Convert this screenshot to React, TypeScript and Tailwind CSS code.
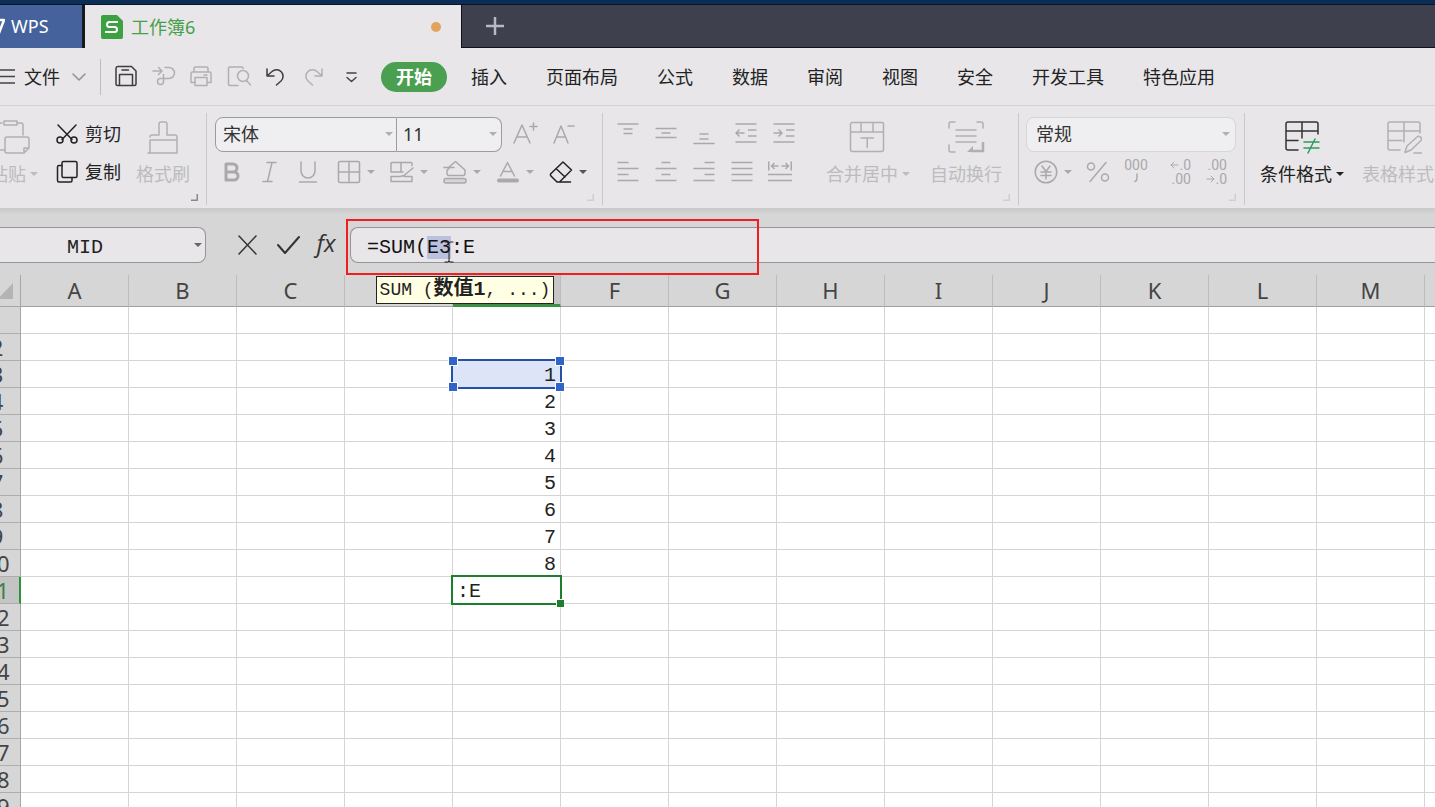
import React, { useEffect, useRef, useState } from "react";
import clsx from "clsx";

const COLUMNS = ["A", "B", "C", "D", "E", "F", "G", "H", "I", "J", "K", "L", "M", "N"];
const ROWS = Array.from({ length: 19 }, (_, i) => i + 1);
const MENUS = ["插入", "页面布局", "公式", "数据", "审阅", "视图", "安全", "开发工具", "特色应用"];

// 被函数提示遮住的列标
const COVERED = ["D", "E"];

const CELLS: Record<string, string> = {
  E3: "1",
  E4: "2",
  E5: "3",
  E6: "4",
  E7: "5",
  E8: "6",
  E9: "7",
  E10: "8",
  E11: ":E",
};

type IconProps = {
  w?: number;
  h?: number;
  className?: string;
  children: React.ReactNode;
};

function Icon({ w = 24, h = 24, className, children }: IconProps) {
  return (
    <svg
      width={w}
      height={h}
      viewBox={`0 0 ${w} ${h}`}
      fill="none"
      stroke="currentColor"
      strokeWidth="1.5"
      strokeLinecap="round"
      strokeLinejoin="round"
      className={clsx("shrink-0", className)}
      aria-hidden="true"
    >
      {children}
    </svg>
  );
}

function Caret({ className }: { className?: string }) {
  return (
    <svg width="8" height="4" viewBox="0 0 8 4" className={clsx("shrink-0", className)} aria-hidden="true">
      <path d="M0 0h8L4 4z" fill="currentColor" />
    </svg>
  );
}

function Group({ className, corner, children }: { className?: string; corner?: string; children: React.ReactNode }) {
  return (
    <section className={clsx("relative flex h-[92px] shrink-0 border-r border-[#c9c9c9]", className)}>
      {children}
      {corner && (
        <Icon w={7} h={7} className={clsx("absolute right-2 bottom-1", corner)}>
          <path d="M6.25 0v6.25H0" />
        </Icon>
      )}
    </section>
  );
}

function SmallButton({ label, className, children }: { label: string; className?: string; children: React.ReactNode }) {
  return (
    <button aria-label={label} className={clsx("flex h-[38px] w-[38px] shrink-0 items-center justify-center", className)}>
      {children}
    </button>
  );
}

function SplitButton({ label, className, children }: { label: string; className?: string; children: React.ReactNode }) {
  return (
    <button aria-label={label} className={clsx("flex h-[38px] w-[53px] shrink-0 items-center gap-1.5 pl-1", className)}>
      {children}
      <Caret />
    </button>
  );
}

function TallButton({ label, caret, className, children }: { label: string; caret?: boolean; className?: string; children: React.ReactNode }) {
  return (
    <button className={clsx("flex shrink-0 flex-col pt-[3px] text-lg whitespace-nowrap", className)}>
      <span className="flex h-[38px] w-full items-center justify-center">{children}</span>
      <span className="flex h-9 w-full items-center justify-center gap-1">
        {label}
        {caret && <Caret />}
      </span>
    </button>
  );
}

function Tabs() {
  return (
    <header className="flex h-[43px] bg-[#3e404e]">
      <button className="flex w-[85px] items-center gap-1.5 border-r-[3px] border-[#17191f] bg-[#45629d] pb-0.5 text-lg text-white">
        <Icon w={5} h={16}>
          <path d="M-6 2h10L-1 15" strokeWidth="2.5" />
        </Icon>
        WPS
      </button>
      <button className="flex w-[376px] items-center bg-[#e8e6e9] pr-5 pl-4 text-lg text-[#46a049]">
        <svg width="22" height="24" viewBox="0 0 22 24" className="mr-2 shrink-0" aria-hidden="true">
          <path d="M2 0h14l6 6v16a2 2 0 0 1-2 2H2a2 2 0 0 1-2-2V2a2 2 0 0 1 2-2z" fill="#3ca141" />
          <path
            d="M16 7H8.500a2.500 2.500 0 0 0 0 5h5a2.500 2.500 0 0 1 0 5H5"
            fill="none"
            stroke="#fff"
            strokeWidth="2"
            strokeLinecap="square"
          />
        </svg>
        工作簿6
        <span className="ml-auto size-2.5 rounded-full bg-[#e2a35f]" />
      </button>
      <div className="flex flex-1 border-b border-l border-[#101116] pl-6">
        <button aria-label="新建" className="flex items-center text-[#b6b9c6]">
          <Icon w={18} h={20}>
            <path d="M0 10h18M9 1v18" strokeWidth="2.5" strokeLinecap="butt" />
          </Icon>
        </button>
      </div>
    </header>
  );
}

function MenuBar() {
  return (
    <nav className="flex h-[58px] items-center border-b border-[#d3d2d4] text-lg whitespace-nowrap text-[#222]">
      <button className="flex items-center">
        <Icon w={15} h={15} className="mr-[9px] text-[#444]">
          <path d="M-3 1h18M-3 7.500h18M-3 14h18" strokeLinecap="butt" />
        </Icon>
        文件
        <Icon w={14} h={8} className="ml-3 text-[#909090]">
          <path d="M1 1l6 6 6-6" />
        </Icon>
      </button>
      <span className="ml-3.5 h-9 w-px bg-[#bdbdbd]" />
      <div className="ml-[13px] flex w-[249px] justify-between text-[#b0b0b2]">
        <button aria-label="保存" className="text-[#3d3d3d]">
          <Icon>
            <path d="M4 1.500h13.500l4.500 4.500v13a1.500 1.500 0 0 1-1.500 1.500H3.500A1.500 1.500 0 0 1 2 19V3.500a2 2 0 0 1 2-2z" />
            <path d="M5.500 20V9.500h13V20M8 5h6.500" />
          </Icon>
        </button>
        <button aria-label="输出">
          <Icon>
            <path d="M1 6h8.500M6.500 2.500L10 6l-3.500 3.500M13 2.500h4a5.500 5.500 0 0 1 0 11H8.500a3 3 0 1 0 3 3V9.500" />
          </Icon>
        </button>
        <button aria-label="打印">
          <Icon>
            <path d="M5 7V3.500A1.500 1.500 0 0 1 6.500 2h11A1.500 1.500 0 0 1 19 3.500V7M5.500 17.500H2V8.500A1.500 1.500 0 0 1 3.500 7h17A1.500 1.500 0 0 1 22 8.500v9h-3.500M6 12.500h12v8H6zM15 10h3" />
          </Icon>
        </button>
        <button aria-label="打印预览">
          <Icon>
            <path d="M11 20.500H3A1.500 1.500 0 0 1 1.500 19V3.500A1.500 1.500 0 0 1 3 2h11.500A1.500 1.500 0 0 1 16 3.500" />
            <circle cx="16" cy="11" r="5.500" />
            <path d="M19.500 15.500l4 4.500" />
          </Icon>
        </button>
        <button aria-label="撤销" className="text-[#3d3d3d]">
          <Icon>
            <path d="M3 4v7h7M3.500 10.500L8 6.500A6.500 6.500 0 1 1 17 16l-4.500 4" />
          </Icon>
        </button>
        <button aria-label="恢复">
          <Icon>
            <path d="M20 4v7h-7M19.500 10.500L15 6.500A6.500 6.500 0 1 0 6 16l4.500 4" />
          </Icon>
        </button>
        <button aria-label="自定义" className="text-[#444]">
          <Icon>
            <path d="M8 8h9M8 12.500l4.500 4 4.500-4" />
          </Icon>
        </button>
      </div>
      <button className="ml-[18px] h-[30px] w-[66px] rounded-full bg-[#4a9f50] font-bold text-white">开始</button>
      <div className="ml-6 flex gap-[39px]">
        {MENUS.map((menu) => (
          <button key={menu}>{menu}</button>
        ))}
      </div>
    </nav>
  );
}

function AlignIcon({ d }: { d: string }) {
  return (
    <Icon>
      <path d={d} strokeLinecap="butt" />
    </Icon>
  );
}

function SmallArrow({ d }: { d: string }) {
  return (
    <Icon w={9} h={8}>
      <path d={d} strokeWidth="1" />
    </Icon>
  );
}

function Ribbon() {
  return (
    <div className="flex h-[102px] overflow-hidden pt-[7px] text-[#a9a9ab]">
      {/* 剪贴板 */}
      <Group className="w-[207px] pt-0.5" corner="text-[#888]">
        <TallButton label="粘贴" caret className="-ml-2.5 text-[#bcbcbe]">
          <Icon w={38} h={34} className="mr-[7px] text-[#b0b0b2]">
            <path d="M10 3H5a2 2 0 0 0-2 2v23a2 2 0 0 0 2 2h7M25 3h4a2 2 0 0 1 2 2v10M12 1h13v4H12zM13 19a2 2 0 0 1 2-2h20a2 2 0 0 1 2 2v9l-5 5H15a2 2 0 0 1-2-2zM32 33v-5h5" />
          </Icon>
        </TallButton>
        <div className="ml-[17px] shrink-0 text-lg text-[#222]">
          <button className="flex h-[38px] items-center gap-1.5 whitespace-nowrap">
            <Icon>
              <path d="M3 3l14 14.500M21 3L7 17.500" />
              <circle cx="5" cy="18" r="3" />
              <circle cx="19" cy="18" r="3" />
            </Icon>
            剪切
          </button>
          <button className="flex h-[38px] items-center gap-1.5 whitespace-nowrap">
            <Icon>
              <rect x="7" y="1.500" width="15" height="16" rx="1.500" />
              <path d="M7 5.500H4A1.500 1.500 0 0 0 2.500 7v13.500A1.500 1.500 0 0 0 4 22h11.500a1.500 1.500 0 0 0 1.500-1.500v-3" />
            </Icon>
            复制
          </button>
        </div>
        <TallButton label="格式刷" className="ml-[15px] text-[#bcbcbe]">
          <Icon w={32} h={34} className="text-[#b0b0b2]">
            <path d="M3 17a2 2 0 0 1 2-2h7V4a2 2 0 0 1 2-2h4a2 2 0 0 1 2 2v11h8a2 2 0 0 1 2 2v16H1M3 33V20h27" />
          </Icon>
        </TallButton>
      </Group>

      {/* 字体 */}
      <Group className="w-[396px] flex-col pt-0.5 pl-1.5" corner="text-[#cfcfcf]">
        <div className="flex h-[38px] items-center pl-0.5">
          <label className="relative flex h-[35px] w-[182px] items-center">
            <select aria-label="字体" className="size-full appearance-none rounded-l-lg border border-[#9c9c9c] bg-[#efeef0] pl-[7px] text-lg text-[#333]">
              <option>宋体</option>
            </select>
            <Caret className="pointer-events-none absolute right-1 text-[#b0b0b0]" />
          </label>
          <label className="relative flex h-[35px] w-[105px] items-center">
            <select aria-label="字号" className="size-full appearance-none rounded-r-lg border border-l-0 border-[#9c9c9c] bg-[#efeef0] pl-1.5 text-lg text-[#333]">
              <option>11</option>
            </select>
            <Caret className="pointer-events-none absolute right-[5px] text-[#b0b0b0]" />
          </label>
          <SmallButton label="增大字号" className="ml-1">
            <Icon w={26} h={24}>
              <path d="M2 21l8-18 8 18M5 15h10M18 4.500h7M21.500 1v7" />
            </Icon>
          </SmallButton>
          <SmallButton label="减小字号">
            <Icon w={26} h={24}>
              <path d="M4 21l7-17 7 17M6.500 15h9M18 4h6" />
            </Icon>
          </SmallButton>
        </div>
        <div className="flex h-[38px] items-center">
          <SmallButton label="加粗">
            <Icon>
              <path d="M6 4h7a4 4 0 0 1 0 8H6zM6 12h8a4 4 0 0 1 0 8H6z" strokeWidth="3" />
            </Icon>
          </SmallButton>
          <SmallButton label="倾斜">
            <Icon>
              <path d="M9 2.500h9M5 21.500h9M14 2.500l-4.500 19" />
            </Icon>
          </SmallButton>
          <SmallButton label="下划线" className="mr-1.5">
            <Icon>
              <path d="M5 2v9a7 7 0 0 0 14 0V2M3.500 22h17" />
            </Icon>
          </SmallButton>
          <SplitButton label="边框">
            <Icon>
              <rect x="1.500" y="1.500" width="21" height="21" rx="1.500" />
              <path d="M12 1.500v21M1.500 12h21" />
            </Icon>
          </SplitButton>
          <SplitButton label="绘图边框">
            <Icon>
              <path d="M22 5.500v-2a1 1 0 0 0-1-1H2a1 1 0 0 0-1 1v8.500h12M11 2.500V12M1 16.500h9l4-1L23 8M1 16.500v5h21v-5M14 16.500h8" />
            </Icon>
          </SplitButton>
          <SplitButton label="填充颜色">
            <Icon>
              <path d="M6 7l6.500-5.500L22 10v4a2 2 0 0 1-2 1.500H6a2 2 0 0 1-2-1.500v-3.500l3-3.500M1 7.500h10" />
              <rect x="1" y="18.500" width="22" height="4.500" rx="2" fill="#d5d5d6" />
            </Icon>
          </SplitButton>
          <SplitButton label="字体颜色">
            <Icon>
              <path d="M4.500 16l7-13.500L18.500 16M7 11.500h9" />
              <path d="M3 20.500h18" strokeWidth="4" />
            </Icon>
          </SplitButton>
          <SplitButton label="清除" className="text-[#555]">
            <Icon className="text-[#222]">
              <path d="M1.500 14L14 2l8.500 8L10.500 22H8l-6.500-6.500zM7 8.500l9 8.500M10 22h11.500" />
            </Icon>
          </SplitButton>
        </div>
      </Group>

      {/* 对齐方式 */}
      <Group className="w-[416px] pt-0.5 pl-1.5" corner="text-[#cfcfcf]">
        <div className="shrink-0">
          <div className="flex h-[38px]">
            <SmallButton label="顶端对齐">
              <AlignIcon d="M1.500 2h21M7.500 7h9M7.500 11.500h9" />
            </SmallButton>
            <SmallButton label="垂直居中">
              <AlignIcon d="M1.500 6.500h21M7.500 11h9M1.500 15.500h21" />
            </SmallButton>
            <SmallButton label="底端对齐">
              <AlignIcon d="M7.500 12h9M7.500 17h9M1.500 21.500h21" />
            </SmallButton>
            <SmallButton label="减少缩进量" className="ml-1">
              <AlignIcon d="M1.500 2h21M14 8h8.500M14 14h8.500M1.500 20h21M10.500 11h-9M5.500 7.500L2 11l3.500 3.500" />
            </SmallButton>
            <SmallButton label="增加缩进量">
              <AlignIcon d="M1.500 2h21M14 8h8.500M14 14h8.500M1.500 20h21M1.500 11h9M6.500 7.500L10 11l-3.500 3.500" />
            </SmallButton>
          </div>
          <div className="flex h-[38px]">
            <SmallButton label="左对齐">
              <AlignIcon d="M1.500 2.500h11M1.500 8.500h21M1.500 14.500h11M1.500 20.500h21" />
            </SmallButton>
            <SmallButton label="水平居中">
              <AlignIcon d="M7.500 2.500h9M1.500 8.500h21M7.500 14.500h9M1.500 20.500h21" />
            </SmallButton>
            <SmallButton label="右对齐">
              <AlignIcon d="M12.500 2.500h10M1.500 8.500h21M12.500 14.500h10M1.500 20.500h21" />
            </SmallButton>
            <SmallButton label="两端对齐">
              <AlignIcon d="M1.500 2.500h21M1.500 8.500h21M1.500 14.500h21M1.500 20.500h21" />
            </SmallButton>
            <SmallButton label="分散对齐">
              <AlignIcon d="M.75 1.500v9M23.250 1.500v9M10.500 6H3.500M6.500 3L3.500 6l3 3M13.500 6h7M17.500 3l3 3-3 3M0 14.500h24M0 20.500h24" />
            </SmallButton>
          </div>
        </div>
        <TallButton label="合并居中" caret className="ml-[23px] text-[#bcbcbe]">
          <Icon w={36} h={32} className="mr-0.5 text-[#b0b0b2]">
            <path d="M3 1.500h30A1.500 1.500 0 0 1 34.500 3v25.500a2 2 0 0 1-2 2h-29a2 2 0 0 1-2-2V3A1.500 1.500 0 0 1 3 1.500zM1.500 11h33M12 1.500V11M24 1.500V11M12 17h12.500M18.250 17v9.500" />
          </Icon>
        </TallButton>
        <TallButton label="自动换行" className="ml-5 text-[#bcbcbe]">
          <Icon w={38} h={34} className="text-[#b0b0b2]">
            <path d="M8 2H4a2 2 0 0 0-2 2v4M30 2h4a2 2 0 0 1 2 2v4M2 25v5a2 2 0 0 0 2 2h4M9 10h20M9 16h20M9 22h20" />
            <path d="M36 22v9H24" strokeWidth="2.500" strokeLinecap="butt" />
            <path d="M20 32l6-6v6z" fill="currentColor" stroke="none" />
          </Icon>
        </TallButton>
      </Group>

      {/* 数字 */}
      <Group className="w-[226px] flex-col pt-0.5 pl-[7px]" corner="text-[#cfcfcf]">
        <label className="relative flex h-[38px] w-[210px] items-center">
          <select aria-label="数字格式" className="h-[35px] w-full appearance-none rounded-lg border border-[#d6d6d6] bg-[#efeef0] pl-[9px] text-lg text-[#333]">
            <option>常规</option>
          </select>
          <Caret className="pointer-events-none absolute right-1.5 text-[#b0b0b0]" />
        </label>
        <div className="flex h-[38px] items-center pl-1 font-['Roboto',sans-serif] text-sm leading-[14px]">
          <SplitButton label="会计数字格式">
            <Icon>
              <circle cx="12" cy="12" r="10.750" />
              <path d="M8 6l4 5.500L16 6M7 12h10M7 15.500h10M12 11.500V19" />
            </Icon>
          </SplitButton>
          <SmallButton label="百分比样式" className="-ml-1">
            <Icon>
              <path d="M20 2.500L4 21.500" />
              <circle cx="5" cy="6.500" r="3.500" />
              <circle cx="19" cy="17.500" r="3.500" />
            </Icon>
          </SmallButton>
          <SmallButton label="千位分隔样式" className="flex-col">
            <span>000</span>
            <Icon w={5} h={14}>
              <path d="M3 2v4c0 2-1 3-2 3.500" />
            </Icon>
          </SmallButton>
          <SmallButton label="增加小数位数" className="ml-1 flex-col items-end pr-1.5">
            <span className="flex items-center">
              <SmallArrow d="M8 4H1M4 1L1 4l3 3" />
              .0
            </span>
            <span>.00</span>
          </SmallButton>
          <SmallButton label="减少小数位数" className="flex-col items-end pr-2">
            <span>.00</span>
            <span className="flex items-center">
              <SmallArrow d="M1 4h7M5 1l3 3-3 3" />
              .0
            </span>
          </SmallButton>
        </div>
      </Group>

      <TallButton label="条件格式" caret className="mt-0.5 ml-[15px] text-[#222]">
        <Icon w={36} h={34} className="text-[#333]">
          <path d="M14 30H4a2 2 0 0 1-2-2V4a2 2 0 0 1 2-2h28a2 2 0 0 1 2 2v10M2 11h32M2 20.500h12M18 2v16" />
          <g stroke="#2f9a5f">
            <path d="M20 22h15M20 28h15M31 19l-7 14" />
          </g>
        </Icon>
      </TallButton>
      <TallButton label="表格样式" caret className="mt-0.5 ml-[18px] text-[#bcbcbe]">
        <Icon w={36} h={34} className="text-[#b0b0b2]">
          <path d="M14 30H4a2 2 0 0 1-2-2V4a2 2 0 0 1 2-2h28a2 2 0 0 1 2 2v9M2 11h32M2 20.500h14M18 2v20M19 32l2-6 10-9c2-2 6 1 4 3.500L25 30l-6 2.500M28 33h8" />
        </Icon>
      </TallButton>
    </div>
  );
}

function FormulaBar() {
  const [value, setValue] = useState("=SUM(E3:E");
  const inputRef = useRef<HTMLInputElement>(null);

  useEffect(() => {
    // 选中第一个引用
    inputRef.current?.focus();
    inputRef.current?.setSelectionRange(5, 7);
  }, []);

  return (
    <div className="relative flex h-[67px] items-start bg-linear-to-b from-[#c9c9c9] to-[#d6d6d6] to-10% pt-[19px] text-[#333]">
      <label className="relative flex h-9 w-[206px] items-center">
        <input
          aria-label="名称框"
          defaultValue="MID"
          className="size-full rounded-r-lg border border-l-0 border-[#959597] bg-[#e8e6e9] pt-1 pr-[35px] text-center font-['Liberation_Mono','Noto_Sans_CJK_SC',monospace] text-xl text-[#222]"
        />
        <Caret className="pointer-events-none absolute right-1 text-[#666]" />
      </label>
      <div className="ml-[30px] flex h-9 items-center">
        <button aria-label="取消" className="mr-4">
          <Icon>
            <path d="M3 3l17 18M20 3L3 21" />
          </Icon>
        </button>
        <button aria-label="输入" className="mr-3">
          <Icon>
            <path d="M2 12l7 8L23 4" strokeWidth="2" />
          </Icon>
        </button>
        <button aria-label="插入函数" className="w-7 pb-1 text-center font-['Open_Sans',sans-serif] text-2xl leading-6 italic">
          fx
        </button>
      </div>
      <input
        ref={inputRef}
        aria-label="编辑栏"
        value={value}
        onChange={(e) => setValue(e.target.value)}
        className="ml-2.5 h-9 min-w-0 flex-1 rounded-l-lg border border-r-0 border-[#959597] bg-[#e8e6e9] pt-1 pl-4 font-['Liberation_Mono','Noto_Sans_CJK_SC',monospace] text-xl text-[#111] outline-none selection:bg-[#b9c1df] selection:text-[#111]"
      />
      <div className="pointer-events-none absolute top-[11px] left-[346px] h-14 w-[413px] border-2 border-[#f21d1d]" />
      <Icon w={10} h={22} className="pointer-events-none absolute top-[33px] left-[444px] text-[#222]">
        <path d="M1 1h3l1 1 1-1h3M5 2v18M1 21h3l1-1 1 1h3" strokeWidth="1" />
      </Icon>
      <div className="absolute top-[68px] left-[376px] z-20 flex h-7 w-[178px] items-center justify-center border border-[#222] bg-[#ffffe4] font-['Liberation_Mono','Noto_Sans_CJK_SC',monospace] text-lg leading-6 whitespace-pre text-[#222]">
        <span>
          SUM (<b className="text-xl leading-6">数值1</b>, ...)
        </span>
      </div>
    </div>
  );
}

function ReferenceFrame() {
  return (
    <div className="absolute -inset-0.5 z-10 border-2 border-[#2450a8]">
      <i className="absolute -top-1 -left-1 size-2 bg-[#3164c8] outline outline-white" />
      <i className="absolute -top-1 -right-1 size-2 bg-[#3164c8] outline outline-white" />
      <i className="absolute -bottom-1 -left-1 size-2 bg-[#3164c8] outline outline-white" />
      <i className="absolute -right-1 -bottom-1 size-2 bg-[#3164c8] outline outline-white" />
    </div>
  );
}

function ActiveFrame() {
  return (
    <div className="absolute -inset-0.5 z-10 border-2 border-[#1d7f2b]">
      <i className="absolute -right-1 -bottom-1 size-2 border-t border-l border-white bg-[#1d7f2b]" />
    </div>
  );
}

function Sheet() {
  return (
    <main className="flex-1 overflow-hidden bg-white">
      <table className="-ml-7 w-[1561px] table-fixed border-separate border-spacing-0">
        <thead>
          <tr className="h-8 bg-[#d6d6d6] font-['Noto_Sans',sans-serif] text-[22px] leading-7 text-[#444]">
            <th className="w-[49px] border-r border-b border-[#a6a6a6] p-0">
              <svg width="15" height="16" viewBox="0 0 15 16" className="ml-[26px]" aria-hidden="true">
                <path d="M15 0v16H0z" fill="#b4b4b4" />
              </svg>
            </th>
            {COLUMNS.map((col) => (
              <th
                key={col}
                aria-label={col}
                className={clsx(
                  "w-[108px] border-r border-b border-r-[#bcbcbc] p-0 pb-0.5 font-normal",
                  col === "E" ? "border-b-[3px] border-b-[#3c8f45] bg-[#c6c6c6]" : "border-b-[#a0a0a0]"
                )}
              >
                {COVERED.includes(col) ? null : col}
              </th>
            ))}
          </tr>
        </thead>
        <tbody>
          {ROWS.map((row) => (
            <tr key={row} className="h-[27px]">
              <th
                className={clsx(
                  "border-b border-b-[#adadad] p-0 pl-0.5 font-['Noto_Sans',sans-serif] text-[22px] leading-[26px] font-normal",
                  row === 11
                    ? "border-r-2 border-r-[#2c9434] bg-[#c4c4c4] text-[#3c7f43]"
                    : "border-r border-r-[#a6a6a6] bg-[#d6d6d6] text-[#444]"
                )}
              >
                {row}
              </th>
              {COLUMNS.map((col) => {
                const id = `${col}${row}`;
                return (
                  <td
                    key={col}
                    className={clsx(
                      "relative border-r border-b border-[#d4d4d4] px-1 pt-1 pb-0 font-['Liberation_Mono',monospace] text-xl leading-[22px] text-[#222]",
                      id === "E11" ? "text-left" : "text-right",
                      id === "E3" && "bg-[#dde4f7]"
                    )}
                  >
                    {CELLS[id]}
                    {id === "E3" && <ReferenceFrame />}
                    {id === "E11" && <ActiveFrame />}
                  </td>
                );
              })}
            </tr>
          ))}
        </tbody>
      </table>
    </main>
  );
}

export default function App() {
  return (
    <div className="flex h-screen flex-col overflow-hidden bg-[#e8e6e9] font-['Noto_Sans','Noto_Sans_CJK_SC',sans-serif]">
      <div className="h-[5px] shrink-0 border-b border-[#08152c] bg-[#0c2d54]" />
      <Tabs />
      <MenuBar />
      <Ribbon />
      <FormulaBar />
      <Sheet />
    </div>
  );
}
